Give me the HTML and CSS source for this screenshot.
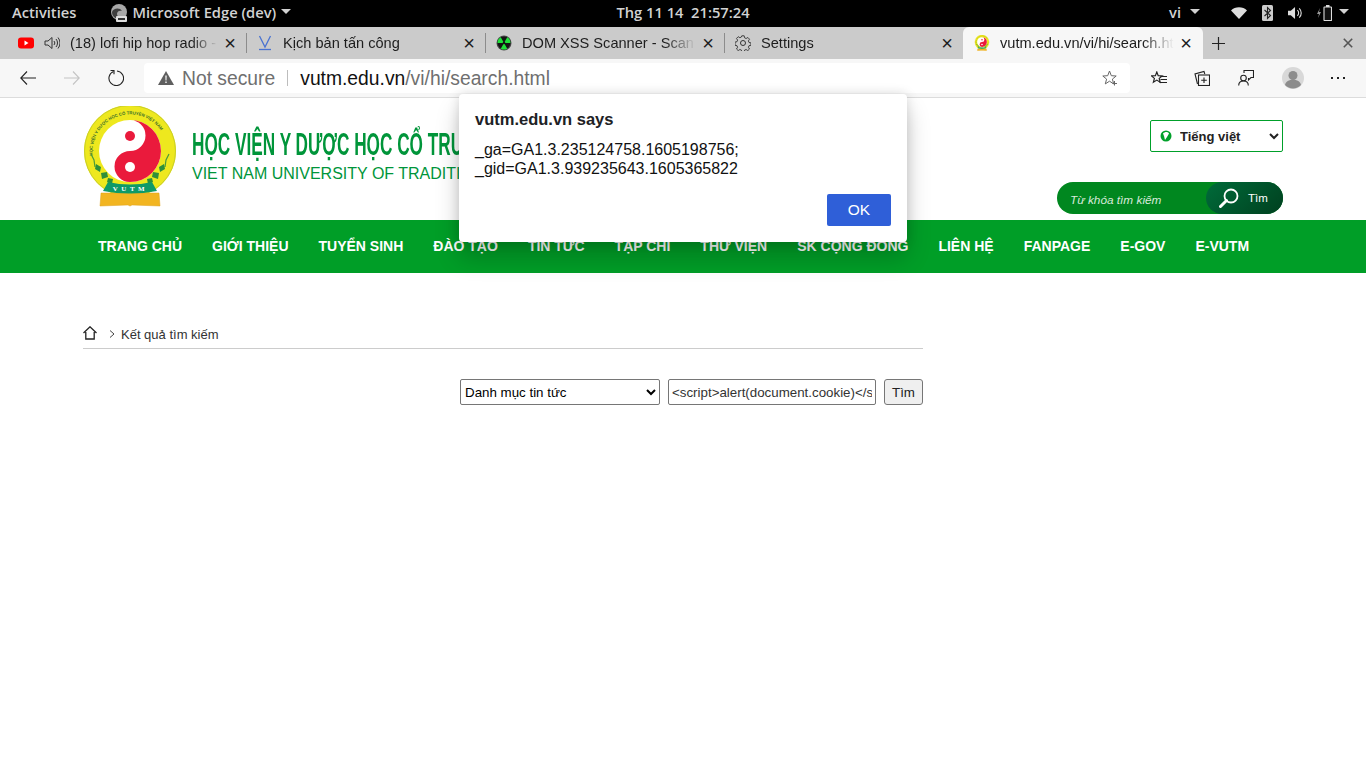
FILE: index.html
```html
<!DOCTYPE html>
<html lang="vi">
<head>
<meta charset="utf-8">
<title>vutm.edu.vn/vi/hi/search.html</title>
<link rel="stylesheet" href="styles.css">
</head>
<body>
<svg class="defs" width="0" height="0" aria-hidden="true">
  <defs>
    <symbol id="logo" viewBox="0 0 94 102">
      <circle cx="47" cy="45" r="46" fill="#eee81e"/>
      <circle cx="47" cy="45" r="45.500" fill="none" stroke="#c9cf2a" stroke-width="1"/>
      <path id="ringpath" d="M10 52A37.500 37.500 0 1 1 84 52" fill="none"/>
      <text class="ring-text"><textPath href="#ringpath" startOffset="2%">HỌC VIỆN Y DƯỢC HỌC CỔ TRUYỀN VIỆT NAM</textPath></text>
      <circle cx="47" cy="45" r="31" fill="#fff"/>
      <path d="M47 14a31 31 0 0 1 0 62a15.500 15.500 0 0 1 0-31a15.500 15.500 0 0 0 0-31z" fill="#ea1a3c"/>
      <circle cx="47" cy="30" r="5" fill="#ea1a3c"/>
      <circle cx="47" cy="61" r="5" fill="#fff"/>
      <path d="M8 48l3 6 1 7" fill="none" stroke="#4c9a3a" stroke-width="1.200"/>
      <path d="M86 48l-3 6-1 7" fill="none" stroke="#4c9a3a" stroke-width="1.200"/>
      <path d="M13 58l5 3-1 5-5-3zM18 67l6-1 1 5-6 2zM25 72l5 1-1 5-5-2zM81 58l-5 3 1 5 5-3zM76 67l-6-1-1 5 6 2zM69 72l-5 1 1 5 5-2z" fill="#2f8f3a"/>
      <path d="M18 87h26l3 1 3-1h26l1 13-28-1-2 1-2-1-28 1z" fill="#f2b521" stroke="#dfa018" stroke-width=".5"/>
      <path d="M25 76q22 5 44 0l5 9q-27 5-54 0z" fill="#0f9a68"/>
      <text class="ribbon-text" x="47.500" y="85" text-anchor="middle">VUTM</text>
    </symbol>
  </defs>
</svg>

<header class="topbar">
  <div class="tb-left">
    <span class="tb-item">Activities</span>
    <span class="tb-app">
      <svg class="ic-edge" viewBox="0 0 18 18"><circle cx="9" cy="8" r="8" fill="#a8a8a8"/><path d="M2 8c1-4 8-5 10-1-2-1-5 0-5 3 0 2 2 4 5 4-4 2-10 0-10-6z" fill="#3d3d3d"/><rect x="6" y="12" width="11" height="6" rx="1" fill="#ddd"/><rect x="8" y="14" width="7" height="2" fill="#333"/></svg>
      <span class="tb-item">Microsoft Edge (dev)</span>
      <i class="caret"></i>
    </span>
  </div>
  <div class="tb-clock">Thg 11 14&nbsp; 21:57:24</div>
  <div class="tb-right">
    <span class="tb-item">vi</span><i class="caret caret-vi"></i>
    <svg class="ic-wifi" viewBox="0 0 16 12"><path d="M0 3.500C4-.8 12-.8 16 3.500L8 12z" fill="#ddd"/></svg>
    <svg class="ic-bt" viewBox="0 0 11 16"><rect width="11" height="16" rx="1.500" fill="#ccc"/><path d="M2.500 5l6 5.500L5.500 13.500V2.500l3 3-6 5.500" fill="none" stroke="#222" stroke-width="1.100"/></svg>
    <svg class="ic-vol" viewBox="0 0 16 14"><path d="M0 4.500h3L7.500.5v13L3 9.500H0z" fill="#ddd"/><path d="M10 4a4 4 0 0 1 0 6M12 2a7 7 0 0 1 0 10" fill="none" stroke="#ddd" stroke-width="1.200"/></svg>
    <svg class="ic-bat" viewBox="0 0 15 16"><path d="M3 3L0 9h2l-1 4 3-6H2z" fill="#999"/><rect x="7" y="2" width="7.500" height="13.500" rx=".5" fill="#111" stroke="#ddd" stroke-width="1.100"/><rect x="9" y="0" width="3.500" height="2" fill="#ddd"/></svg>
    <i class="caret caret-end"></i>
  </div>
</header>

<nav class="tabstrip">
  <div class="tab sep">
    <svg class="fav" viewBox="0 0 16 16"><rect y="2.500" width="16" height="11" rx="3" fill="#f00"/><path d="M6.500 5.500v5l4-2.500z" fill="#fff"/></svg>
    <svg class="speaker" viewBox="0 0 16 16"><path d="M1 6h3l4-3.500v11L4 10H1z" fill="none" stroke="#333"/><path d="M10 6a3 3 0 0 1 0 4M12 4a6 6 0 0 1 0 8M14 2.500a8.500 8.500 0 0 1 0 11" fill="none" stroke="#333"/></svg>
    <span class="tab-title">(18) lofi hip hop radio - beats to</span>
    <span class="tab-x">×</span>
  </div>
  <div class="tab sep">
    <svg class="fav" viewBox="0 0 16 16"><path d="M2.500 1l5.500 11 5.500-11" fill="none" stroke="#4a73d1" stroke-width="1.300"/><path d="M2 14.500h12" stroke="#4a73d1" stroke-width="1.300"/></svg>
    <span class="tab-title">Kịch bản tấn công</span>
    <span class="tab-x">×</span>
  </div>
  <div class="tab sep">
    <svg class="fav" viewBox="0 0 16 16"><circle cx="8" cy="8" r="7.500" fill="#4a4a4a"/><circle cx="8" cy="8" r="6.500" fill="#141414"/><path d="M8 8L11.250 13.630A6.500 6.500 0 0 1 4.750 13.630zM8 8L1.500 8A6.500 6.500 0 0 1 4.750 2.370zM8 8L11.250 2.370A6.500 6.500 0 0 1 14.500 8z" fill="#1fe03a"/><circle cx="8" cy="8" r="1.300" fill="#141414"/></svg>
    <span class="tab-title">DOM XSS Scanner - Scan your site</span>
    <span class="tab-x">×</span>
  </div>
  <div class="tab">
    <svg class="fav" viewBox="0 0 16 16"><circle cx="8" cy="8" r="2.500" fill="none" stroke="#333"/><path d="M6.800.8h2.400l.4 2 1.500.7 1.800-1 1.600 1.700-1.100 1.700.6 1.600 2 .4v2.400l-2 .4-.6 1.500 1.100 1.800-1.700 1.600-1.700-1.100-1.500.6-.4 2H6.800l-.4-2-1.500-.6-1.700 1.100-1.700-1.600 1.100-1.800-.6-1.500-2-.4V7.100l2-.4.6-1.600-1.100-1.700 1.700-1.700 1.700 1 1.500-.7z" fill="none" stroke="#333" stroke-width=".9"/></svg>
    <span class="tab-title">Settings</span>
    <span class="tab-x">×</span>
  </div>
  <div class="tab tab-active">
    <svg class="fav"><use href="#logo"/></svg>
    <span class="tab-title">vutm.edu.vn/vi/hi/search.html</span>
    <span class="tab-x">×</span>
  </div>
  <svg class="newtab" viewBox="0 0 13 13"><path d="M6.500 0v13M0 6.500h13" stroke="#222" stroke-width="1.200"/></svg>
  <span class="spacer"></span>
  <svg class="closewin" viewBox="0 0 10 10"><path d="M.8.800l8.400 8.400M9.200.800L.8 9.200" stroke="#555" stroke-width="1.600"/></svg>
</nav>

<div class="toolbar">
  <svg class="nav-ic" viewBox="0 0 16 14"><path d="M7 .5L.8 7l6.200 6.500M1 7h15" fill="none" stroke="#222" stroke-width="1.100"/></svg>
  <svg class="nav-ic nav-fwd" viewBox="0 0 16 14"><path d="M9 .5L15.200 7 9 13.500M15 7H0" fill="none" stroke="#c4c4c4" stroke-width="1.100"/></svg>
  <svg class="nav-ic nav-reload" viewBox="0 0 16 16"><path d="M5.500 1.500A7.300 7.300 0 1 0 9 1" fill="none" stroke="#222" stroke-width="1.100"/><path d="M2.500 .5h3.500v3.800" fill="none" stroke="#222" stroke-width="1.100"/></svg>
  <div class="omnibox">
    <svg class="warn" viewBox="0 0 16 14"><path d="M8 0l8 14H0z" fill="#5f5f5f"/><path d="M7.300 4.500h1.400l-.2 5h-1zM7.300 10.500h1.400V12H7.300z" fill="#f7f7f7"/></svg>
    <span class="notsecure">Not secure</span>
    <span class="omni-sep"></span>
    <span class="url"><b>vutm.edu.vn</b>/vi/hi/search.html</span>
    <span class="spacer"></span>
    <svg class="star" viewBox="0 0 16 16"><path d="M7.500 1l1.800 4.700 4.900.3-3.800 3.100 1.300 4.800-4.200-2.700-4.200 2.700 1.300-4.800L.8 6l4.900-.3z" fill="none" stroke="#666"/><path d="M12.500 11v4.500M10.500 13.500h4.500" stroke="#666"/></svg>
  </div>
  <svg class="tool favs" viewBox="0 0 16 14"><path d="M5.800 1l1.400 3.700 4 .2-3 2.500 1 3.800-3.400-2.100-3.400 2.100 1-3.800-3-2.500 4-.2z" fill="none" stroke="#222" stroke-width="1.200"/><path d="M9.500 5.500H16M9.500 8.500H16M8.500 11.500H16" stroke="#222" stroke-width="1.100"/></svg>
  <svg class="tool colls" viewBox="0 0 16 16"><path d="M3.500 14L1 4l9-2.500.8 2.500" fill="none" stroke="#222" stroke-width="1.100"/><rect x="4.500" y="5" width="11" height="10.500" fill="#f7f7f7" stroke="#222" stroke-width="1.100"/><path d="M10 7.500v5.500M7.200 10.300h5.600" stroke="#222" stroke-width="1.100"/></svg>
  <svg class="tool share" viewBox="0 0 16 16"><path d="M6 3V.5h9.500v7H13L10.500 10V8" fill="none" stroke="#222" stroke-width="1.100"/><circle cx="5.500" cy="8" r="2.800" fill="none" stroke="#222" stroke-width="1.100"/><path d="M.7 15.500c0-6 9.600-6 9.600 0" fill="none" stroke="#222" stroke-width="1.100"/></svg>
  <svg class="avatar" viewBox="0 0 22 22"><circle cx="11" cy="11" r="11" fill="#d8d8d8"/><circle cx="11" cy="8.500" r="4.500" fill="#8c8c8c"/><path d="M3 18c1-7 15-7 16 0a11 11 0 0 1-16 0z" fill="#8c8c8c"/></svg>
  <span class="dots"><i></i><i></i><i></i></span>
</div>

<main class="page">
  <section class="site-header">
    <div class="container header-inner">
      <svg class="logo"><use href="#logo"/></svg>
      <div class="brand">
        <div class="brand-vi">HỌC VIỆN Y DƯỢC HỌC CỔ TRUYỀN VIỆT NAM</div>
        <div class="brand-en">VIET NAM UNIVERSITY OF TRADITIONAL MEDICINE</div>
      </div>
      <div class="header-tools">
        <div class="lang">
          <svg class="globe" viewBox="0 0 12 12"><circle cx="6" cy="6" r="5.500" fill="#00a02a"/><path d="M3 3.500c2-2 5-2 6 0L7 7 5 10 4 6z" fill="#fff"/></svg>
          <select class="lang-select"><option>Tiếng việt</option></select>
        </div>
        <form class="search">
          <span class="search-ph">Từ khóa tìm kiếm</span>
          <span class="search-btn">
            <svg class="lens" viewBox="0 0 20 20"><circle cx="12" cy="8" r="6.500" fill="none" stroke="#fff" stroke-width="1.800"/><path d="M7.500 12.500L1.500 18.500" stroke="#fff" stroke-width="3" stroke-linecap="round"/></svg>
            <span>Tìm</span>
          </span>
        </form>
      </div>
    </div>
  </section>

  <section class="mainnav">
    <ul class="container nav-list">
      <li>TRANG CHỦ</li><li>GIỚI THIỆU</li><li>TUYỂN SINH</li><li>ĐÀO TẠO</li><li>TIN TỨC</li><li>TẠP CHÍ</li><li>THƯ VIỆN</li><li>SK CỘNG ĐỒNG</li><li>LIÊN HỆ</li><li>FANPAGE</li><li>E-GOV</li><li>E-VUTM</li>
    </ul>
  </section>

  <section class="container content">
    <div class="col-main">
      <div class="crumb">
        <svg class="home" viewBox="0 0 14 14"><path d="M.5 7L7 .8 13.500 7M2.800 6v7h8.400V6" fill="none" stroke="#222" stroke-width="1.300"/></svg>
        <svg class="chev" viewBox="0 0 6 8"><path d="M1 .5L5 4 1 7.500" fill="none" stroke="#444"/></svg>
        <span>Kết quả tìm kiếm</span>
      </div>
      <form class="filter">
        <select class="f-select"><option>Danh mục tin tức</option></select>
        <input class="f-input" type="text" value="&lt;script&gt;alert(document.cookie)&lt;/script&gt;">
        <button class="f-btn" type="button">Tìm</button>
      </form>
    </div>
  </section>
</main>

<div class="dialog" role="alertdialog">
  <div class="d-title">vutm.edu.vn says</div>
  <div class="d-msg">_ga=GA1.3.235124758.1605198756;<br>_gid=GA1.3.939235643.1605365822</div>
  <div class="d-actions"><button class="d-ok" type="button">OK</button></div>
</div>
</body>
</html>
```
FILE: styles.css
```css
* { box-sizing: border-box; }
html, body { margin: 0; padding: 0; }
body { width: 1366px; height: 768px; overflow: hidden; background: #fff; font-family: "Liberation Sans", Arial, sans-serif; position: relative; }
.defs { position: absolute; }
.spacer { flex: 1; }

.topbar { height: 27px; background: #000; color: #d2d2d2; display: grid; grid-template-columns: 1fr auto 1fr; align-items: center; font-family: "Open Sans", sans-serif; font-size: 14.700px; font-weight: 600; padding-bottom: 4px; }
.tb-left, .tb-right, .tb-app { display: flex; align-items: center; }
.tb-left { gap: 34px; padding-left: 12px; }
.tb-app { gap: 4px; }
.tb-right { justify-content: flex-end; padding-right: 17px; }
.ic-edge { width: 18px; height: 18px; margin-top: 2px; }
.caret { width: 0; height: 0; border: 5px solid transparent; border-top: 5px solid #d2d2d2; border-bottom: 0; margin-left: 1px; }
.caret-vi { margin-left: 9px; margin-right: 31px; }
.ic-wifi { width: 16px; height: 12px; margin-right: 15px; margin-top: 2px; }
.ic-bt { width: 11px; height: 16px; margin-right: 15px; margin-top: 2px; }
.ic-vol { width: 15px; height: 14px; margin-right: 14px; margin-top: 2px; }
.ic-bat { width: 15px; height: 16px; margin-right: 5px; margin-top: 2px; }
.caret-end { margin-left: 2px; }

.tabstrip { height: 32px; background: #cbcbcb; display: flex; align-items: stretch; padding-left: 8px; color: #1d1d1d; font-size: 14.600px; }
.tab { width: 239px; display: flex; align-items: center; padding: 0 11px 0 10px; position: relative; }
.tab.sep::after { content: ""; position: absolute; right: 0; top: 6px; height: 20px; width: 1px; background: #8c8c8c; }
.tab-active { background: #f7f7f7; border-radius: 6px 6px 0 0; width: 240px; margin-left: -1px; padding-left: 11px; }
.fav { width: 16px; height: 16px; margin-right: 10px; flex: none; }
.speaker { width: 16px; height: 16px; margin-right: 10px; flex: none; }
.tab-title { flex: 1; min-width: 0; white-space: nowrap; overflow: hidden; -webkit-mask-image: linear-gradient(90deg, #000 82%, transparent 100%); mask-image: linear-gradient(90deg, #000 82%, transparent 100%); }
.tab-x { width: 12px; margin-left: 6px; font-size: 20px; line-height: 20px; text-align: center; flex: none; }
.newtab { width: 13px; height: 13px; align-self: center; margin-left: 9px; }
.closewin { width: 10px; height: 10px; align-self: center; margin-right: 13px; }

.toolbar { height: 39px; background: #f7f7f7; border-bottom: 1px solid #dcdcdc; display: flex; align-items: center; padding: 0 28px 1px 20px; }
.nav-ic { width: 16px; height: 14px; flex: none; margin-right: 28px; }
.nav-fwd { margin-right: 28px; }
.nav-reload { height: 16px; margin-right: 20px; }
.omnibox { width: 986px; height: 30px; background: #fff; border-radius: 4px; display: flex; align-items: center; padding: 0 12px 0 14px; color: #6f6f6f; font-size: 19.300px; margin-right: 20px; flex: none; }
.warn { width: 16px; height: 14px; margin-right: 8px; }
.notsecure { color: #6f6f6f; padding-top: 2px; }
.omni-sep { width: 1px; height: 16px; background: #bdbdbd; margin: 0 12px; }
.url { padding-top: 2px; }
.url b { font-weight: 400; color: #111; }
.star { width: 16px; height: 16px; }
.tool { flex: none; width: 16px; height: 16px; margin-right: 28px; }
.favs { height: 14px; margin-left: 1px; margin-right: 27px; }
.avatar { width: 22px; height: 22px; flex: none; margin-right: 27px; }
.dots { display: flex; gap: 4px; }
.dots i { width: 2px; height: 2px; background: #222; display: block; }

.container { width: 1200px; margin: 0 auto; }
.site-header { height: 122px; }
.header-inner { display: flex; height: 122px; position: relative; }
.logo { width: 94px; height: 102px; margin-top: 8px; flex: none; }
.ring-text { font-family: "Liberation Sans", sans-serif; font-size: 4.300px; font-weight: 700; fill: #3b6f2c; }
.ribbon-text { font-family: "Liberation Serif", serif; font-size: 7px; font-weight: 700; fill: #fff; letter-spacing: 3.500px; }
.brand { margin-left: 15px; padding-top: 30px; white-space: nowrap; color: #00953a; }
.brand-vi { font-size: 31px; font-weight: 700; line-height: 34px; transform: scaleX(.555); transform-origin: left center; width: 400px; }
.brand-en { font-size: 16px; line-height: 22px; margin-top: 1px; }
.header-tools { margin-left: auto; width: 226px; display: flex; flex-direction: column; align-items: flex-end; padding-top: 22px; }
.lang { position: relative; }
.globe { position: absolute; left: 10px; top: 10px; width: 12px; height: 12px; }
.lang-select { width: 133px; height: 32px; background: #fff; border: 1px solid #00a02a; border-radius: 2px; font-family: "Liberation Sans", sans-serif; font-size: 13px; font-weight: 700; color: #222; padding-left: 25px; }
.search { width: 226px; height: 32px; margin-top: 30px; background: #00871f; border-radius: 16px; display: flex; align-items: center; justify-content: space-between; color: #fff; }
.search-ph { font-size: 11.800px; font-style: italic; padding-left: 13px; color: #d8eadb; padding-top: 3px; }
.search-btn { width: 77px; height: 32px; border-radius: 16px; background: linear-gradient(135deg, #006b3a, #00401f); display: flex; align-items: center; gap: 9px; padding-left: 13px; font-size: 11.500px; }
.lens { width: 20px; height: 20px; }

.mainnav { height: 53px; background: #009e27; }
.nav-list { list-style: none; margin: 0 auto; padding: 0 0 2px; display: flex; height: 53px; align-items: center; }
.nav-list li { padding: 0 15px; color: #fff; font-size: 14px; font-weight: 700; white-space: nowrap; }

.content { padding-top: 52px; }
.col-main { width: 840px; }
.crumb { height: 24px; border-bottom: 1px solid #ccc; display: flex; align-items: flex-start; font-size: 13px; color: #333; padding-top: 1px; line-height: 17px; }
.home { width: 14px; height: 14px; flex: none; margin-right: 12px; }
.chev { width: 6px; height: 8px; margin-top: 4px; margin-right: 6px; flex: none; }
.filter { display: flex; justify-content: flex-end; gap: 8px; padding-top: 30px; }
.f-select { width: 200px; height: 26px; background: #fff; font-family: "Liberation Sans", sans-serif; font-size: 13.333px; border: 1px solid #767676; border-radius: 2px; color: #000; padding-left: 0; }
.f-input { width: 208px; height: 26px; font-family: "Liberation Sans", sans-serif; font-size: 13.333px; border: 1px solid #767676; border-radius: 2px; padding: 1px 3px; color: #333; }
.f-btn { width: 39px; height: 26px; font-family: "Liberation Sans", sans-serif; font-size: 13.333px; border: 1px solid #767676; border-radius: 3px; background: #efefef; color: #222; padding: 0; }

.dialog { position: absolute; left: 459px; top: 94px; width: 448px; height: 148px; background: #fff; border-radius: 4px; box-shadow: 0 16px 24px rgba(0,0,0,.2), 0 0 12px rgba(0,0,0,.14); padding: 16px; color: #202124; }
.d-title { font-size: 16.500px; font-weight: 700; line-height: 18px; }
.d-msg { font-size: 16px; line-height: 19px; margin-top: 12px; color: #111; }
.d-actions { display: flex; justify-content: flex-end; margin-top: 16px; }
.d-ok { width: 64px; height: 32px; border: 0; border-radius: 2px; background: #2f5fd8; color: #fff; font-family: "Liberation Sans", sans-serif; font-size: 15.500px; }
```
